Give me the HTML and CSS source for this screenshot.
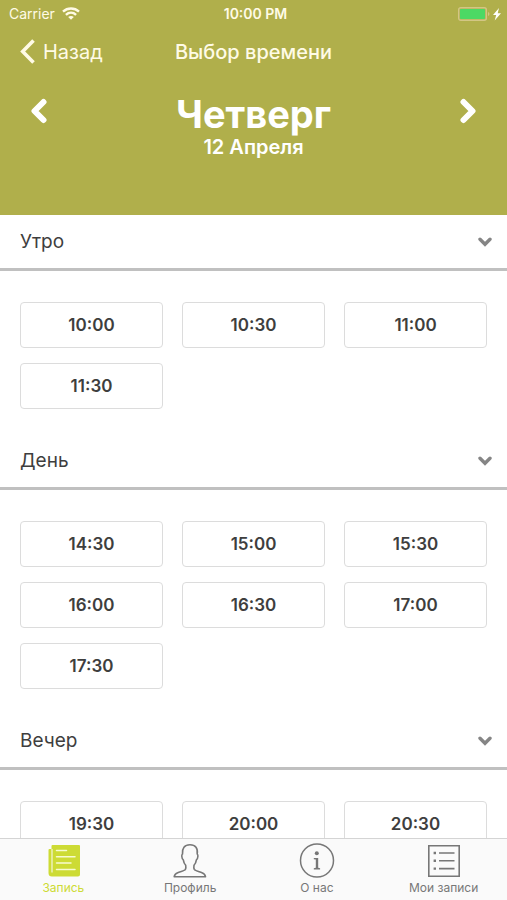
FILE: index.html
```html
<!DOCTYPE html>
<html lang="ru">
<head>
<meta charset="utf-8">
<meta name="viewport" content="width=device-width, initial-scale=1">
<title>Выбор времени</title>
<link rel="stylesheet" href="styles.css">
</head>
<body>
<header class="header">
  <div class="status">
    <div class="status-left">
      <span>Carrier</span>
      <svg width="18" height="13" viewBox="0 0 18 13" fill="none" stroke="currentColor" stroke-width="2.400" aria-hidden="true">
        <path d="M1 4.600C5.600.4 12.400.4 17 4.600"/>
        <path d="M3.900 7.800c3-2.800 7.200-2.800 10.200 0"/>
        <path d="M9 12.800 6.200 10c1.500-1.400 4.100-1.400 5.600 0z" fill="currentColor" stroke="none"/>
      </svg>
    </div>
    <span class="status-time">10:00 PM</span>
    <div class="status-right">
      <svg width="44" height="14" viewBox="0 0 44 14" aria-hidden="true">
        <rect x=".7" y=".7" width="27.600" height="12.600" rx="2" fill="none" stroke="#d3c685" stroke-width="1.400"/>
        <rect x="2" y="2" width="25" height="10" rx="1" fill="#4cd964"/>
        <path d="M30 5v4q1.500-.6 1.500-2T30 5z" fill="#d3c685"/>
        <path d="M41 1 35 8h3.200l-1.500 5.500L43 6.200h-3.300z" fill="#fff"/>
      </svg>
    </div>
  </div>
  <nav class="navbar">
    <a class="back" href="#">
      <svg width="15" height="25" viewBox="0 0 15 25" fill="none" stroke="currentColor" stroke-width="3.600" aria-hidden="true"><path d="M13.500 1.500 2.700 12.500l10.800 11"/></svg>
      <span>Назад</span>
    </a>
    <h1 class="title">Выбор времени</h1>
  </nav>
  <div class="day">
    <button class="arrow" type="button" aria-label="Предыдущий день">
      <svg width="18" height="26" viewBox="0 0 18 26" fill="none" stroke="currentColor" stroke-width="6" stroke-linejoin="round" stroke-linecap="round" aria-hidden="true"><path d="M13.500 4 4.500 13l9 9"/></svg>
    </button>
    <div class="date">
      <h2 class="weekday">Четверг</h2>
      <p class="month">12 Апреля</p>
    </div>
    <button class="arrow" type="button" aria-label="Следующий день">
      <svg width="18" height="26" viewBox="0 0 18 26" fill="none" stroke="currentColor" stroke-width="6" stroke-linejoin="round" stroke-linecap="round" aria-hidden="true"><path d="M4.500 4l9 9-9 9"/></svg>
    </button>
  </div>
</header>

<main class="schedule">
  <section>
    <button class="section-head" type="button" aria-expanded="true">
      <span>Утро</span>
      <svg width="14" height="10" viewBox="0 0 14 10" fill="none" stroke="#858585" stroke-width="3.400" stroke-linecap="round" aria-hidden="true"><path d="M2 2.300l5 5 5-5"/></svg>
    </button>
    <div class="slots">
      <button class="slot" type="button">10:00</button>
      <button class="slot" type="button">10:30</button>
      <button class="slot" type="button">11:00</button>
      <button class="slot" type="button">11:30</button>
    </div>
  </section>
  <section>
    <button class="section-head" type="button" aria-expanded="true">
      <span>День</span>
      <svg width="14" height="10" viewBox="0 0 14 10" fill="none" stroke="#858585" stroke-width="3.400" stroke-linecap="round" aria-hidden="true"><path d="M2 2.300l5 5 5-5"/></svg>
    </button>
    <div class="slots">
      <button class="slot" type="button">14:30</button>
      <button class="slot" type="button">15:00</button>
      <button class="slot" type="button">15:30</button>
      <button class="slot" type="button">16:00</button>
      <button class="slot" type="button">16:30</button>
      <button class="slot" type="button">17:00</button>
      <button class="slot" type="button">17:30</button>
    </div>
  </section>
  <section>
    <button class="section-head" type="button" aria-expanded="true">
      <span>Вечер</span>
      <svg width="14" height="10" viewBox="0 0 14 10" fill="none" stroke="#858585" stroke-width="3.400" stroke-linecap="round" aria-hidden="true"><path d="M2 2.300l5 5 5-5"/></svg>
    </button>
    <div class="slots">
      <button class="slot" type="button">19:30</button>
      <button class="slot" type="button">20:00</button>
      <button class="slot" type="button">20:30</button>
    </div>
  </section>
</main>

<nav class="tabs">
  <a class="tab tab-active" href="#" aria-current="page">
    <svg width="36" height="36" viewBox="0 0 36 36" aria-hidden="true">
      <path d="M7.500 2H34a1 1 0 0 1 1 1v28.500a2 2 0 0 1-2 2H7a3.500 3.500 0 0 1-3.500-3.500V7a1 1 0 0 1 1-1h2V3a1 1 0 0 1 1-1z" fill="currentColor"/>
      <path d="M7 6v23.500" stroke="#fafafa" stroke-width="1" fill="none"/>
      <path d="M11.500 7.500h10M11.500 13.700H30M11.500 20h14.500M11.500 26.500H30" stroke="#f7fbd0" stroke-width="1.500" stroke-linecap="round"/>
    </svg>
    <span>Запись</span>
  </a>
  <a class="tab" href="#">
    <svg width="36" height="36" viewBox="0 0 36 36" fill="none" stroke="currentColor" stroke-width="1.600" stroke-linejoin="round" aria-hidden="true">
      <path d="M2.200 33.700c.4-2.200 1.300-3.200 3.500-4 3.500-1.300 6.800-1.900 7.700-3.400.6-1.200.5-3 .3-4-1.400-1.500-2.100-3.200-2.400-5.400-1-.6-1.400-2-1.500-3.600-.1-1 .1-1.800.7-2.300C9.900 5.200 12.500 1.700 18 1.700s8.100 3.500 7.200 9.300c.6.5.8 1.300.7 2.300-.1 1.600-.5 3-1.500 3.600-.3 2.200-1 3.900-2.400 5.400-.2 1-.3 2.800.3 4 .9 1.500 4.200 2.100 7.700 3.400 2.200.8 3.100 1.800 3.500 4z"/>
    </svg>
    <span>Профиль</span>
  </a>
  <a class="tab" href="#">
    <svg width="36" height="36" viewBox="0 0 36 36" fill="none" stroke="currentColor" stroke-width="1.500" aria-hidden="true">
      <circle cx="18" cy="17.500" r="16.500"/>
      <circle cx="17.800" cy="10.300" r="2" fill="currentColor" stroke="none"/>
      <path d="M14.800 15h4.400v9.800l1.900.5v1.200h-6.300v-1.200l2-.5v-8.200l-2-.4z" fill="currentColor" stroke="none"/>
    </svg>
    <span>О нас</span>
  </a>
  <a class="tab" href="#">
    <svg width="36" height="36" viewBox="0 0 36 36" fill="none" stroke="currentColor" stroke-width="1.600" aria-hidden="true">
      <path d="M2.800 2.800h30.400v30.400H2.800z"/>
      <path d="M13 10h15.500M13 17.800h15.500M13 25.600h15.500"/>
      <path d="M7.600 10h2.400M7.600 17.800H10M7.600 25.600H10" stroke-width="2.400"/>
    </svg>
    <span>Мои записи</span>
  </a>
</nav>
</body>
</html>
```
FILE: styles.css
```css
* {
  box-sizing: border-box;
}

body {
  margin: 0;
  height: 100vh;
  display: flex;
  flex-direction: column;
  background: #fff;
  color: #3e3e3e;
  font-family: Inter, "Liberation Sans", sans-serif;
}

h1, h2, p {
  margin: 0;
}

button {
  font: inherit;
  color: inherit;
  cursor: pointer;
}

a {
  color: inherit;
  text-decoration: none;
}

svg {
  display: block;
}

.header {
  flex: none;
  padding-bottom: 56px;
  background: #b0af4b;
  color: #fff;
}

.status {
  display: grid;
  grid-template-columns: 1fr auto 1fr;
  align-items: center;
  height: 27px;
  padding: 0 5px 0 9px;
  font-size: 14px;
  color: #fffbe6;
}

.status-left {
  display: flex;
  align-items: center;
  gap: 7px;
}

.status-time {
  font-weight: 600;
}

.status-right {
  justify-self: end;
}

.navbar {
  display: grid;
  grid-template-columns: 1fr auto 1fr;
  align-items: center;
  height: 49px;
  padding: 0 20px;
  color: #fffbe6;
}

.back {
  display: flex;
  align-items: center;
  gap: 8px;
  font-size: 20px;
}

.title {
  font-size: 20px;
  font-weight: 500;
}

.day {
  display: flex;
  justify-content: space-between;
  align-items: flex-start;
  padding: 16px 20px 0;
}

.arrow {
  padding: 6px 10px;
  border: 0;
  background: none;
}

.date {
  text-align: center;
}

.weekday {
  font-size: 38px;
  line-height: 44px;
  font-weight: 700;
}

.month {
  font-size: 20px;
  line-height: 23px;
  font-weight: 600;
}

.schedule {
  flex: 1;
  min-height: 0;
  overflow-y: auto;
  scrollbar-width: none;
}

.section-head {
  display: flex;
  justify-content: space-between;
  align-items: center;
  width: 100%;
  height: 56px;
  padding: 0 15px 0 20px;
  border: 0;
  border-bottom: 3px solid #c0c0c0;
  background: #fff;
  font-size: 19px;
}

.slots {
  display: grid;
  grid-template-columns: repeat(3, 1fr);
  gap: 15px 19px;
  padding: 31px 20px 25px;
}

.slot {
  height: 46px;
  padding: 0;
  border: 1px solid #dcdcdc;
  border-radius: 4px;
  background: #fff;
  font-size: 17px;
  font-weight: 600;
}

.tabs {
  flex: none;
  display: grid;
  grid-template-columns: repeat(4, 1fr);
  height: 62px;
  border-top: 1px solid #d4d4d4;
  background: #fafafa;
}

.tab {
  display: flex;
  flex-direction: column;
  align-items: center;
  gap: 1px;
  padding-top: 4px;
  color: #777;
  font-size: 12px;
  line-height: 16px;
}

.tab-active {
  color: #cddb35;
}
```
